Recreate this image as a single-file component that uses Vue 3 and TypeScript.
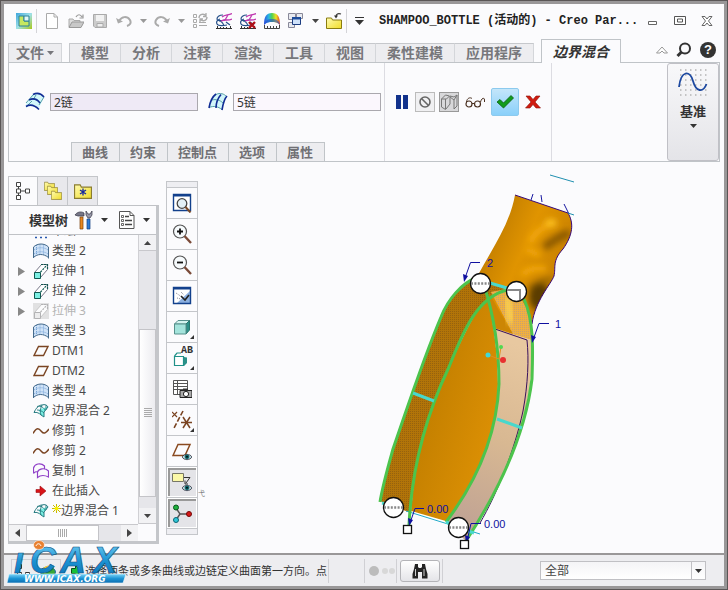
<script setup lang="ts">
import { ref } from 'vue'

interface TreeNode {
  label: string
  icon: string
  expandable?: boolean
  suppressed?: boolean
  pending?: boolean
}

const quickGroups: { icon: string; label: string; caret?: boolean }[] = [
  { icon: 'new', label: '新建' },
  { icon: 'open', label: '打开' },
  { icon: 'save', label: '保存' },
  { icon: 'undo', label: '撤消', caret: true },
  { icon: 'redo', label: '重做', caret: true },
  { icon: 'regen', label: '重新生成' },
  { icon: 'mesh', label: '曲面分析' },
  { icon: 'meshx', label: '删除分析' },
  { icon: 'rainbow', label: '外观' },
  { icon: 'windows', label: '窗口', caret: true },
  { icon: 'closef', label: '关闭' },
]

const ribbonTabs = ['模型', '分析', '注释', '渲染', '工具', '视图', '柔性建模', '应用程序']
const panelTabs = ['曲线', '约束', '控制点', '选项', '属性']

const tree: TreeNode[] = [
  { label: '草绘 1', icon: 'sketch' },
  { label: '类型 2', icon: 'style' },
  { label: '拉伸 1', icon: 'extrude', expandable: true },
  { label: '拉伸 2', icon: 'extrude', expandable: true },
  { label: '拉伸 3', icon: 'extrude', expandable: true, suppressed: true },
  { label: '类型 3', icon: 'style' },
  { label: 'DTM1', icon: 'plane' },
  { label: 'DTM2', icon: 'plane' },
  { label: '类型 4', icon: 'style' },
  { label: '边界混合 2', icon: 'blend' },
  { label: '修剪 1', icon: 'trim' },
  { label: '修剪 2', icon: 'trim' },
  { label: '复制 1', icon: 'copy' },
  { label: '在此插入', icon: 'insert' },
  { label: '边界混合 1', icon: 'blend', pending: true },
]

const viewTools: { icon: string; label: string; on?: boolean; more?: boolean }[] = [
  { icon: 'refit', label: '重新调整' },
  { icon: 'zoomin', label: '放大' },
  { icon: 'zoomout', label: '缩小' },
  { icon: 'repaint', label: '重画' },
  { icon: 'shade', label: '显示样式', more: true },
  { icon: 'views', label: '已命名视图', more: true },
  { icon: 'manager', label: '视图管理器' },
  { icon: 'datum', label: '基准显示', more: true },
  { icon: 'planeeye', label: '平面显示' },
  { icon: 'noteeye', label: '注释显示', on: true },
  { icon: 'spin', label: '旋转中心', on: true },
]

const firstDir = ref('2链')
const secondDir = ref('5链')
const filter = ref('全部')
</script>

<template>
  <div class="window">
    <svg class="defs" aria-hidden="true">
      <defs>
        <linearGradient id="gCreo" x1="0" y1="0" x2="1" y2="1">
          <stop offset="0" stop-color="#3da6dc" />
          <stop offset=".5" stop-color="#9fe0e8" />
          <stop offset="1" stop-color="#a8c818" />
        </linearGradient>
        <linearGradient id="gFolder" x1="0" y1="0" x2="1" y2="1">
          <stop offset="0" stop-color="#fffbb0" />
          <stop offset="1" stop-color="#f0dc28" />
        </linearGradient>
        <linearGradient id="gRain" x1="0" y1="0" x2="1" y2="0">
          <stop offset="0" stop-color="#3050e0" />
          <stop offset=".3" stop-color="#28b8e0" />
          <stop offset=".5" stop-color="#50d050" />
          <stop offset=".75" stop-color="#f0e020" />
          <stop offset="1" stop-color="#e04030" />
        </linearGradient>
      </defs>
      <symbol id="creo" viewBox="0 0 16 16">
        <rect width="16" height="16" fill="url(#gCreo)" />
        <path d="M3 3h5v5h5v5H3z" fill="#c6e860" stroke="#2a8098" />
        <path d="M8 3h5v5H8z" fill="#e0f6f4" stroke="#2a8098" />
      </symbol>
      <symbol id="new" viewBox="0 0 16 16">
        <path d="M2.500 .5h7.500l3.500 3.500v11.500h-11z" fill="#fff" stroke="#aaa" />
        <path d="M10 .5v3.500h3.500" fill="none" stroke="#aaa" />
      </symbol>
      <symbol id="open" viewBox="0 0 16 16">
        <path d="M1 14V6h4l1 1.500h6V9" fill="#ddd" stroke="#aaa" />
        <path d="M1 14.500 4 9h12l-3 5.500z" fill="#c8c8c8" stroke="#999" />
        <path d="M8 4c1.500-3 4.500-3 6 0M15 1.500V5h-3.500" fill="none" stroke="#999" stroke-width="1.200" />
      </symbol>
      <symbol id="save" viewBox="0 0 16 16">
        <path d="M1.500 1.500h13v13H3l-1.500-1.500z" fill="#ccc" stroke="#aaa" />
        <path d="M4 2h8v6H4z" fill="#f2f2f2" />
        <path d="M5 10.500h6V14H5z" fill="#eee" stroke="#aaa" />
      </symbol>
      <symbol id="undo" viewBox="0 0 16 16">
        <path d="M3 8c3-5 8-5 11-1 1.500 3 0 5-3 6" fill="none" stroke="#aaa" stroke-width="2" />
        <path d="M0 5l2 5.500 5-2z" fill="#aaa" />
      </symbol>
      <symbol id="redo" viewBox="0 0 16 16">
        <path d="M13 8c-3-5-8-5-11-1-1.500 3 0 5 3 6" fill="none" stroke="#aaa" stroke-width="2" />
        <path d="M16 5l-2 5.500-5-2z" fill="#aaa" />
      </symbol>
      <symbol id="regen" viewBox="0 0 16 16">
        <g fill="none" stroke="#aaa">
          <path d="M1.500 1.500h3v3h-3zM1.500 6.500h3v3h-3zM1.500 11.500h3v3h-3zM7 9.500h7M7 12.500h8" />
          <path d="M7 5c0-4 5-5 7-2M15 4c0 4-5 5-7 2M14 0v3.500h-3M8 9V6h3" stroke-width="1.300" />
        </g>
      </symbol>
      <symbol id="mesh" viewBox="0 0 16 16">
        <path d="M7 2C3 2 1 4 1 6s3 2 8 1M4 6C1 7 0 9 1 11s5 2 10 1M3 8c3 0 4 2 5 5M10 9l4 3" fill="none" stroke="#26508a" stroke-width="1.200" />
        <path d="M6 4C9 1.500 12 2.500 16 .5M5 8C9 6 12 8 16 6M12 2 9 7" fill="none" stroke="#c038b0" stroke-width="1.300" />
        <path d="M0 15.500h16M1.500 13v2M4.500 14v1M7.500 14v1M10.500 14v1M14.500 13v2" stroke="#333" />
      </symbol>
      <symbol id="meshx" viewBox="0 0 16 16">
        <use href="#mesh" width="16" height="16" />
        <path d="M9 9l6 6M15 9l-6 6" stroke="#b01018" stroke-width="2.400" />
      </symbol>
      <symbol id="rainbow" viewBox="0 0 16 16">
        <path d="M0 12C0 4 2 0 8 0s8 4 8 12c-3-3-5-3-8-3s-5 0-8 3z" fill="url(#gRain)" />
        <path d="M0 12c3-3 5-3 8-3s5 0 8 3c-1-5-4-6-8-6s-7 1-8 6z" fill="#2848d0" opacity=".6" />
        <path d="M.5 12v3.500h15V12M3.500 13v2M6.500 13v2M9.500 13v2M12.500 13v2" fill="none" stroke="#444" />
      </symbol>
      <symbol id="windows" viewBox="0 0 16 16">
        <path d="M.5.5h7v6h-7zM8.500 .5h6v5h-6zM.5 9.500h6v5h-6z" fill="#e8eaf0" stroke="#889" />
        <path d="M4.500 4.500h8v7h-8z" fill="#cfe2fa" stroke="#1c3c80" />
        <path d="M4 4h9v2.500H4z" fill="#1c4c9c" />
      </symbol>
      <symbol id="closef" viewBox="0 0 16 16">
        <path d="M.5 15.500V5h5l1 2h9v8.500z" fill="url(#gFolder)" stroke="#8a7c10" />
        <path d="M15 1c-3-1-5 0-5 3" fill="none" stroke="#333" stroke-width="1.200" />
        <path d="M8 2.500h4l-2 3z" fill="#333" />
      </symbol>
      <symbol id="folder" viewBox="0 0 16 14">
        <path d="M.5 13.500V1.500h5l1 2h9v10z" fill="url(#gFolder)" stroke="#8a7c30" />
      </symbol>
      <symbol id="surf" viewBox="0 0 20 20">
        <path d="M1 12C5 6 7 2 8 2c4-2 8 0 11 3l-5 11C11 12 6 12 1 16z" fill="#d2f6fa" />
        <path d="M1 11 8 3M14 13l5-8M8 8l3-5M1 15l6-6" stroke="#58a0a8" fill="none" />
        <path d="M8 2.500c4-2 8-1 11 2.500M4 8c4-2 8-1 11 3M1 14.500c5-3 9-1 13 3" stroke="#102c94" stroke-width="1.600" fill="none" />
      </symbol>
      <symbol id="surf2" viewBox="0 0 20 20">
        <path d="M1 16C2 8 5 3 8 2c4-1 8 0 11 2-3 3-4 9-5 14-3-3-8-4-13-2z" fill="#d2f6fa" />
        <path d="M8 2.500c4-2 8-1 11 2.500M4 8c4-1 8 0 11 3M1 15.500c5-2 9-1 13 2" stroke="#58a0a8" fill="none" />
        <path d="M8 2C4 5 2 10 1 16M13 2.500C10 6 8 10 8 16M19 4c-3 3-4 8-5 14" stroke="#102c94" stroke-width="1.600" fill="none" />
      </symbol>
      <symbol id="style" viewBox="0 0 16 16">
        <path d="M.5 14.500V4c4-4 11-4 15 0v11c-2-2-4-3-5-3-4-1-7 0-10 2.500z" fill="#cfe2f7" />
        <path d="M3.500 2v10M7 1.500V12M10.500 1.500V12M1 7c4-3 10-3 14 0M1 11c4-3 10-3 14 0" stroke="#7aa6d8" fill="none" stroke-dasharray="1 1" />
        <path d="M.5 15V4c4-4 11-4 15 0v11.500M.5 14.500c4-4 10-4 15 0" fill="none" stroke="#456a8c" />
      </symbol>
      <symbol id="extrude" viewBox="0 0 16 16">
        <path d="M1.500 9.500 8.500 1.500h6v5l-7 8" fill="#fff" stroke="#778" />
        <path d="M8 1.500h6.500V7M7.500 9l6.500-7" fill="none" stroke="#105850" stroke-width="1.200" stroke-dasharray="2 1" />
        <path d="M1.500 9.500h6v6h-6z" fill="#7cf0e4" stroke="#105850" />
      </symbol>
      <symbol id="plane" viewBox="0 0 16 16">
        <path d="M5.500 3.500H15l-4.500 9H1z" fill="none" stroke="#7a4422" stroke-width="1.400" />
      </symbol>
      <symbol id="blend" viewBox="0 0 16 16">
        <path d="M6 7c3-2 5-2 9-3l-4 5v5L8 12C7 10 6 9 6 7z" fill="#7cf0e4" />
        <path d="M1 9.500C3 5 6 2 9 2c3-1 5 0 6 2l-4 5v5l-3-2c-2-2-4-3-7-2.500z" fill="none" stroke="#257a80" />
        <path d="M4 3.500c4-1 7 1 8 4M9 2C7 6 7 9 8 12M4 7c3 0 5 1 7 3M13 2v5" fill="none" stroke="#257a80" stroke-width=".9" />
      </symbol>
      <symbol id="trim" viewBox="0 0 16 16">
        <path d="M0 10.500C4 3.500 6 5.500 8.500 8.500S13 10 16 6" fill="none" stroke="#7a4422" stroke-width="1.500" />
      </symbol>
      <symbol id="copy" viewBox="0 0 16 16">
        <path d="M.5 10.500V5c1-4 7-6 11-2v3M4.500 14.500V9c1-3 7-5 11-1v6c-4-2-8-2-11 .5zM.5 10.500c1-1.500 2-2 4-2" fill="none" stroke="#9040c8" stroke-width="1.200" />
      </symbol>
      <symbol id="insert" viewBox="0 0 16 16">
        <path d="M3 6.500h4V3l6 5-6 5V9.500H3z" fill="#d81418" stroke="#a00c10" stroke-width=".6" />
      </symbol>
      <symbol id="sketch" viewBox="0 0 16 16">
        <path d="M2 14.500h12M2 11h12" stroke="#2858b0" stroke-width="1.500" stroke-dasharray="2 3" />
      </symbol>
      <symbol id="eye" viewBox="0 0 10 8">
        <path d="M0 4C2 .5 8 .5 10 4 8 7.500 2 7.500 0 4z" fill="#bcd8dc" stroke="#334" stroke-width=".8" />
        <circle cx="5" cy="3.800" r="2.400" fill="#10686c" />
        <circle cx="5" cy="3.800" r="1" fill="#011" />
      </symbol>
      <symbol id="refit" viewBox="0 0 20 20">
        <path d="M1.500 1.500h17v16h-17z" fill="#fff" stroke="#12408c" stroke-width="1.400" />
        <path d="M1 1h18v2.500H1z" fill="#12408c" />
        <circle cx="10" cy="10.500" r="4.800" fill="#e4f0f6" stroke="#444" stroke-width="1.300" />
        <path d="M13.500 14l5 5.500" stroke="#7a4a28" stroke-width="2" />
      </symbol>
      <symbol id="zoomin" viewBox="0 0 20 20">
        <circle cx="8" cy="7.500" r="6.500" fill="#f6fafc" stroke="#555" stroke-width="1.200" />
        <path d="M5 7.500h6M8 4.500v6" stroke="#111" stroke-width="1.800" />
        <path d="M12.500 12l6.500 7" stroke="#7a4a38" stroke-width="2.400" />
      </symbol>
      <symbol id="zoomout" viewBox="0 0 20 20">
        <circle cx="8" cy="7.500" r="6.500" fill="#f6fafc" stroke="#555" stroke-width="1.200" />
        <path d="M5 7.500h6" stroke="#111" stroke-width="1.800" />
        <path d="M12.500 12l6.500 7" stroke="#7a4a38" stroke-width="2.400" />
      </symbol>
      <symbol id="repaint" viewBox="0 0 20 20">
        <path d="M2 2h16v15H2z" fill="#fff" />
        <path d="M18 5v12H5z" fill="#8cb0e0" />
        <path d="M1.500 1.500h17v16h-17z" fill="none" stroke="#12408c" stroke-width="1.400" />
        <path d="M1 1h18v2.500H1z" fill="#12408c" />
        <path d="M4 7l6 4M5 12l4 1M9 6l3 3" stroke="#889" stroke-dasharray="1 1" />
        <path d="M9 10l4 4 4-5" fill="none" stroke="#222" stroke-width="1.600" />
      </symbol>
      <symbol id="shade" viewBox="0 0 20 20">
        <path d="M2.500 7 6 3.500h11.500L14 7z" fill="#d4f4f0" stroke="#57908c" />
        <path d="M14 7l3.500-3.500V13L14 17z" fill="#2c9088" stroke="#287870" />
        <path d="M2.500 7H14v10H2.500z" fill="#a4e4dc" stroke="#57908c" />
      </symbol>
      <symbol id="views" viewBox="0 0 20 20">
        <path d="M2.500 8.500h9v9h-9zM2.500 8l2.500-3h4" fill="#fff" stroke="#209088" stroke-width="1.200" />
        <path d="M12 9v9l3-3V9.500" fill="#2c9088" />
      </symbol>
      <symbol id="manager" viewBox="0 0 20 20">
        <path d="M1.500 1.500h14v14h-14zM1.500 4.500h14M1.500 7.500h14M1.500 10.500h14M5.500 1.500v14" fill="#fff" stroke="#555" />
        <path d="M8 11.500h12v7H8z" fill="#aaa" stroke="#222" />
        <circle cx="14" cy="15" r="2.600" fill="#fff" stroke="#222" />
        <path d="M11 9.500h5v2h-5z" fill="#333" />
      </symbol>
      <symbol id="datum" viewBox="0 0 20 20">
        <path d="M0 2l5 5M5 2 0 7" stroke="#7a4422" stroke-width="1.200" />
        <path d="M11 1 2 18" stroke="#7a4422" stroke-width="1.600" stroke-dasharray="5 2" />
        <path d="M9 12.500h11M18 7l-7 11M11 7l7 11" stroke="#7a4422" stroke-width="1.500" />
      </symbol>
      <symbol id="planeeye" viewBox="0 0 20 20">
        <path d="M6 3.500h12l-5 11H1z" fill="none" stroke="#8a4a20" stroke-width="1.500" />
        <use href="#eye" x="10" y="12" width="10" height="8" />
      </symbol>
      <symbol id="noteeye" viewBox="0 0 20 20">
        <path d="M.5 1.500h11v8H.5z" fill="#fbf8a8" stroke="#776" />
        <path d="M12 5.500h6L14 11" fill="none" stroke="#333" />
        <path d="M13 8.500v3.500h3" fill="none" stroke="#333" />
        <use href="#eye" x="10" y="12" width="10" height="8" />
      </symbol>
      <symbol id="spin" viewBox="0 0 20 20">
        <path d="M4 5l4 6h8M8 11l-4 6" stroke="#555" stroke-width="1.400" fill="none" />
        <circle cx="4" cy="4.500" r="2.500" fill="#20b040" stroke="#085818" />
        <circle cx="17" cy="11" r="2.500" fill="#d81818" stroke="#700808" />
        <circle cx="4" cy="17" r="2.500" fill="#30c8d8" stroke="#0c6474" />
      </symbol>
      <symbol id="caret" viewBox="0 0 7 4"><path d="M0 0h7L3.500 4z" fill="currentColor" /></symbol>
    </svg>

    <header class="titlebar">
      <button class="qbtn" aria-label="Creo"><svg class="i16"><use href="#creo" /></svg></button>
      <span class="vsep" />
      <template v-for="q in quickGroups" :key="q.icon">
        <button class="qbtn" :aria-label="q.label"><svg class="i16"><use :href="'#' + q.icon" /></svg></button>
        <button v-if="q.caret" class="qcaret" :class="{ dim: q.icon !== 'windows' }" :aria-label="q.label + '列表'">
          <svg class="car"><use href="#caret" /></svg>
        </button>
      </template>
      <span class="vsep" />
      <button class="qcaret custom" aria-label="自定义">
        <svg width="9" height="8" viewBox="0 0 9 8"><path d="M0 .5h9" stroke="#333" /><path d="M0 3h9L4.500 8z" fill="#333" /></svg>
      </button>
      <h1>SHAMPOO_BOTTLE (活动的) - Creo Par...</h1>
      <div class="winbtns">
        <button aria-label="最小化"><svg width="12" height="12" viewBox="0 0 12 12"><path d="M1.500 6.500h8v3h-8z" fill="#fff" stroke="#666" /></svg></button>
        <button aria-label="最大化"><svg width="12" height="12" viewBox="0 0 12 12"><path d="M.5 1.500h11v8H.5zM3.500 4h5v3h-5z" fill="#fff" stroke="#555" /></svg></button>
        <button aria-label="关闭窗口"><svg width="12" height="12" viewBox="0 0 12 12"><path d="M1 1.500h3l2 2.500 2-2.500h3L7.500 6l3.500 4.500H8L6 8l-2 2.500H1L4.500 6z" fill="#fff" stroke="#666" /></svg></button>
      </div>
    </header>

    <nav class="tabs">
      <button class="tab file">文件<svg class="car"><use href="#caret" /></svg></button>
      <div class="tabset">
        <button v-for="t in ribbonTabs" :key="t" class="tab">{{ t }}</button>
      </div>
      <button class="tab active">边界混合</button>
      <div class="tabtools">
        <button aria-label="最小化功能区"><svg width="12" height="8" viewBox="0 0 12 8"><path d="M.5 7 6 1l5.500 6H8L6 5 4 7z" fill="#fff" stroke="#999" /></svg></button>
        <button aria-label="搜索"><svg width="16" height="16" viewBox="0 0 16 16"><circle cx="9" cy="6.500" r="5" fill="none" stroke="#333" stroke-width="2" /><path d="M5.500 10 1.500 14" stroke="#333" stroke-width="3" /></svg></button>
        <button class="help" aria-label="帮助">?</button>
      </div>
    </nav>

    <section class="ribbon">
      <div class="dash">
        <div class="fields">
          <label for="dir1" aria-label="第一方向"><svg width="20" height="20"><use href="#surf" /></svg></label>
          <input id="dir1" v-model="firstDir" class="on" type="text" />
          <label for="dir2" class="second" aria-label="第二方向"><svg width="20" height="20"><use href="#surf2" /></svg></label>
          <input id="dir2" v-model="secondDir" type="text" />
        </div>
        <div class="subtabs">
          <button v-for="p in panelTabs" :key="p">{{ p }}</button>
        </div>
      </div>
      <div class="confirm">
        <button class="pause" aria-label="暂停"><svg width="12" height="14" viewBox="0 0 12 14"><path d="M0 0h5v14H0zM7 0h5v14H7z" fill="#12328c" /></svg></button>
        <button class="box" aria-label="无预览"><svg width="12" height="12" viewBox="0 0 12 12"><circle cx="6" cy="6" r="5" fill="none" stroke="#666" stroke-width="1.600" /><path d="M2.500 2.500l7 7" stroke="#666" stroke-width="1.600" /></svg></button>
        <button class="box pressed" aria-label="分离预览"><svg width="18" height="18" viewBox="0 0 18 18"><path d="M1.500 6l4-4 4 1-3 3zM1.500 6v8l4 2.500V6M6 16l4-5V3l4 1 3-2v11l-3 3v-9l3-5M10 4l4 3" fill="none" stroke="#777" /></svg></button>
        <button class="eyeg" aria-label="校验"><svg width="20" height="12" viewBox="0 0 20 12"><circle cx="4" cy="8" r="3" fill="none" stroke="#4a3020" stroke-width="1.200" /><circle cx="12.500" cy="8" r="3" fill="none" stroke="#4a3020" stroke-width="1.200" /><path d="M7 7.500h2.500M1.500 6C2 2 5 1 7 2.500M15.500 6c1-4 4-5 4-2v2" fill="none" stroke="#4a3020" /></svg></button>
        <button class="ok" aria-label="确定"><svg width="18" height="14" viewBox="0 0 18 14"><path d="M1 7l3-2.500L7.500 8 15 .5 17.500 3 7.500 13z" fill="#109c1c" stroke="#0a5c10" stroke-width=".8" /></svg></button>
        <button class="cancel" aria-label="取消"><svg width="16" height="14" viewBox="0 0 16 14"><path d="M1 1h4l3 3.500L11 1h4l-5 6 5.500 6H11L8 9.500 5 13H.5L6 7z" fill="#d01c10" stroke="#8c1008" stroke-width=".6" /></svg></button>
      </div>
      <div class="spare" />
      <button class="datumbtn">
        <svg width="30" height="30" viewBox="0 0 30 30">
          <path d="M2 2h28M2 7h28M2 12h28M2 17h28M2 22h28M2 27h28" stroke="#b4b4b4" stroke-width="1.500" stroke-dasharray="1.500 3.500" />
          <path d="M1 19C3 2 12 2 15 13s10 12 13.500 3" fill="none" stroke="#1c48a0" stroke-width="1.800" />
        </svg>
        <span>基准</span>
        <svg class="car"><use href="#caret" /></svg>
      </button>
    </section>

    <main class="work">
      <aside class="nav">
        <div class="navtabs">
          <button class="cur" aria-label="模型树"><svg width="14" height="20" viewBox="0 0 14 20"><path d="M.5 1.500h4v4h-4zM.5 8h4v4h-4zM.5 14.500h4v4h-4zM9.500 8h4v4h-4zM2.500 5.500V8M2.500 12v2.500M4.500 10h5" fill="#fff" stroke="#444" /></svg></button>
          <button aria-label="文件夹浏览器"><svg width="20" height="20" viewBox="0 0 20 20"><use href="#folder" x="1" y="0" width="11" height="10" /><use href="#folder" x="4" y="4" width="11" height="10" /><use href="#folder" x="8" y="9" width="11" height="10" /></svg></button>
          <button aria-label="收藏夹"><svg width="18" height="16" viewBox="0 0 18 16"><use href="#folder" x="0" y="0" width="18" height="16" /><path d="M9 5.500v7M6 7l6 4M12 7l-6 4" stroke="#1428a0" stroke-width="1.300" /></svg></button>
        </div>
        <div class="navbox">
          <div class="navhead">
            <h2>模型树</h2>
            <button class="tool" aria-label="设置"><svg width="20" height="20" viewBox="0 0 20 20"><path d="M1 5c2-3 6-4 9-2v3H4z" fill="#778" stroke="#334" stroke-width=".7" /><path d="M6 7h3v12H6z" fill="#e88820" stroke="#7a4008" stroke-width=".7" /><path d="M13 9h3v10h-3z" fill="#2c7cd8" stroke="#103c80" stroke-width=".7" /><path d="M12 1v4l2 3h2l2-3V1l-2 3h-2z" fill="#99a" stroke="#334" stroke-width=".7" /></svg></button>
            <button class="drop" aria-label="设置列表"><svg class="car"><use href="#caret" /></svg></button>
            <button class="tool list" aria-label="显示"><svg width="16" height="20" viewBox="0 0 16 20"><path d="M.5 1.500H11l4 4v13H.5z" fill="#fff" stroke="#555" /><path d="M11 1.500v4h4" fill="none" stroke="#555" /><path d="M6 6.500h4M6 10.500h7M6 14.500h7" stroke="#444" stroke-width="1.300" /><path d="M2.500 5.500h2v2h-2zM2.500 9.500h2v2h-2zM2.500 13.500h2v2h-2z" fill="none" stroke="#444" stroke-width=".8" /></svg></button>
            <button class="drop" aria-label="显示列表"><svg class="car"><use href="#caret" /></svg></button>
          </div>
          <div class="treearea">
            <ul class="tree">
              <li v-for="n in tree" :key="n.label" :class="{ off: n.suppressed }">
                <span class="twist"><svg v-if="n.expandable" width="7" height="9" viewBox="0 0 7 9"><path d="M0 0l7 4.500L0 9z" fill="#888" /></svg></span>
                <svg class="i16"><use :href="'#' + n.icon" /></svg>
                <svg v-if="n.pending" class="star" width="9" height="9" viewBox="0 0 9 9"><path d="M4.500 0v9M0 4.500h9M1 1l7 7M8 1 1 8" stroke="#c8b800" /><circle cx="4.500" cy="4.500" r="2" fill="#f8f000" /></svg>
                <span>{{ n.label }}</span>
              </li>
            </ul>
            <div class="vscroll">
              <button class="end" aria-label="向上"><svg class="car up"><use href="#caret" /></svg></button>
              <div class="gap a" />
              <div class="thumb"><i v-for="k in 5" :key="k" /></div>
              <div class="gap b" />
              <button class="end" aria-label="向下"><svg class="car"><use href="#caret" /></svg></button>
            </div>
          </div>
          <div class="hscroll">
            <button class="end" aria-label="向左"><svg width="5" height="8" viewBox="0 0 5 8"><path d="M5 0v8L0 4z" fill="#444" /></svg></button>
            <div class="thumb"><i v-for="k in 5" :key="k" /></div>
            <div class="gap" />
            <button class="end" aria-label="向右"><svg width="5" height="8" viewBox="0 0 5 8"><path d="M0 0v8l5-4z" fill="#444" /></svg></button>
          </div>
        </div>
      </aside>

      <div class="viewbar">
        <div class="grip" />
        <button v-for="v in viewTools" :key="v.icon" :class="{ on: v.on }" :aria-label="v.label">
          <svg width="20" height="20"><use :href="'#' + v.icon" /></svg>
          <span v-if="v.icon === 'views'" class="ab">AB</span>
          <svg v-if="v.more" class="more" width="4" height="4" viewBox="0 0 4 4"><path d="M4 0v4H0z" fill="#333" /></svg>
        </button>
        <div class="foot" />
      </div>

      <div class="canvas">
        <svg class="model" viewBox="198 163 526 390">
          <defs>
            <pattern id="dots" width="2" height="2" patternUnits="userSpaceOnUse"><rect width="1" height="1" fill="#96620e" /></pattern>
            <pattern id="dots2" width="2" height="2" patternUnits="userSpaceOnUse"><rect width="1" height="1" fill="#c8a070" /></pattern>
            <linearGradient id="gNeck" x1="490" y1="230" x2="560" y2="260" gradientUnits="userSpaceOnUse">
              <stop offset="0" stop-color="#c07c00" /><stop offset=".5" stop-color="#e09400" /><stop offset="1" stop-color="#cc8400" />
            </linearGradient>
            <linearGradient id="gBody" x1="430" y1="400" x2="500" y2="420" gradientUnits="userSpaceOnUse">
              <stop offset="0" stop-color="#c48000" /><stop offset="1" stop-color="#dc9004" />
            </linearGradient>
            <linearGradient id="gSide" x1="530" y1="350" x2="460" y2="530" gradientUnits="userSpaceOnUse">
              <stop offset="0" stop-color="#e8c8a0" /><stop offset=".5" stop-color="#d8b892" /><stop offset="1" stop-color="#bfa294" />
            </linearGradient>
            <clipPath id="neck"><path d="M515 196 568 214C574 224 573 236 563 250 552 262 556 268 554 277 551 285 535 302 532 325L532 341 495 330 478 276C492 250 510 225 515 196z" /></clipPath>
            <filter id="soft" x="-50%" y="-50%" width="200%" height="200%"><feGaussianBlur stdDeviation="3" /></filter>
          </defs>

          <path d="M550 176 574 183" stroke="#2090b0" />
          <g clip-path="url(#neck)">
            <rect x="470" y="190" width="110" height="160" fill="url(#gNeck)" />
            <g filter="url(#soft)">
              <path d="M570 234c-10 2-18 10-26 14" stroke="#8a5800" stroke-width="8" fill="none" />
              <path d="M554 282c-10-4-18 4-26 8" stroke="#a06a00" stroke-width="6" fill="none" />
              <path d="M530 244c4-10 10-14 22-20M526 251c6 0 8 4 14 5M522 276c6-6 14-8 24-6" stroke="#f8ac10" stroke-width="5" fill="none" />
              <ellipse cx="540" cy="298" rx="11" ry="14" fill="#5c3c04" />
              <ellipse cx="551" cy="224" rx="6" ry="4" fill="#ffc420" />
            </g>
          </g>
          <path d="M515 196 568 214C574 224 573 236 563 250 552 262 556 268 554 277 551 285 535 302 532 325" fill="none" stroke="#380878" />
          <path d="M533 195l-2 6M541 196l1 7M564 205l5 10" stroke="#1818a0" />
          <path d="M568 214l6 2" stroke="#2090b0" />

          <path d="M480 277C462 284 448 300 441 318 424 358 412 395 393 450 388 468 383 485 380 502L411 514C415 460 430 410 449 368 464 330 478 298 507 291z" fill="#b27408" />
          <path d="M480 277C462 284 448 300 441 318 424 358 412 395 393 450 388 468 383 485 380 502L411 514C415 460 430 410 449 368 464 330 478 298 507 291z" fill="url(#dots)" />
          <path d="M487 299C474 314 466 332 449 368 428 412 415 460 411 513L446 523C480 478 497 432 498 385 498 365 495 325 487 299z" fill="url(#gBody)" />
          <path d="M489 294 513 336 494 330z" fill="#cc8604" />
          <path d="M491 293 507 290C527 298 532 320 532 341L513 335z" fill="#f0b040" />
          <path d="M491 293 507 290C527 298 532 320 532 341L513 335z" fill="url(#dots2)" />
          <path d="M507 298 511 324" stroke="#ffd850" stroke-width="6" filter="url(#soft)" />
          <path d="M494 329 532 341C534 385 524 430 503 475 490 500 478 522 466 542L446 523C480 478 497 432 498 385 498 365 497 350 494 329z" fill="url(#gSide)" />
          <path d="M495 330 527 341C529 360 528 385 523 412 515 450 497 495 480 524" fill="none" stroke="#38105c" />

          <path d="M411 513.500 447 524" stroke="#fff" stroke-width="3" />
          <path d="M406 512 480 535" stroke="#20a8c8" />
          <g fill="none" stroke="#4cc44c" stroke-width="3">
            <path d="M476 279C462 284 448 300 441 318 424 358 412 395 393 450 388 468 383 485 380 503" />
            <path d="M507 291C478 298 464 330 449 368 428 412 412 465 409 526" />
            <path d="M484 286C495 320 499 355 499 385 497 432 480 478 446 523" />
            <path d="M524 300C534 322 533 350 532 380 526 430 503 485 466 542" />
          </g>
          <g stroke="#48d8cc" stroke-width="3">
            <path d="M490 284 507 289M413 394 434 402M497 420 522 429M382 504 386 505M446 523 451 525M468 532 474 534" />
          </g>

          <path d="M488 356l11 4 2-12M499 360l4 1" stroke="#e09020" fill="none" />
          <circle cx="488" cy="356" r="2.500" fill="#40d8d8" />
          <circle cx="501" cy="348" r="2" fill="#50d850" />
          <circle cx="503" cy="361" r="3" fill="#e83030" />

          <g fill="none" stroke="#1010a0" stroke-width="1">
            <path d="M464.500 280.500 470.500 263.500H480M533 341l6-16.500h10M410 524l5-14.500h9M467 542l4-17.500h10" />
          </g>
          <path d="M463 275l5 2-4 6zM531 336l5 2-4 6zM408 519l5 2-4 6zM465 536l5 2-4 6z" fill="#1010a0" />

          <g fill="#fff" stroke="#111" stroke-width="1.300">
            <circle cx="480.500" cy="284.500" r="10" /><circle cx="516.500" cy="292.500" r="10" />
            <circle cx="393.500" cy="508.500" r="10" /><circle cx="458.500" cy="528.500" r="10" />
            <rect x="403.500" y="526.500" width="8" height="8" /><rect x="460.500" y="541.500" width="8" height="8" />
          </g>
          <path d="M471 284.500h19M384 508.500h19M449 528.500h19" stroke="#888" stroke-width="2.500" stroke-dasharray="2 1.400" />
          <path d="M507 291h13v10" fill="none" stroke="#888" stroke-width="2" />
          <g class="dim">
            <text x="487" y="268">2</text><text x="555" y="329">1</text>
            <text x="427" y="514">0.00</text><text x="484" y="529">0.00</text>
          </g>
          <text class="hint" x="198" y="497">弋</text>
        </svg>
      </div>
    </main>

    <footer class="status">
      <div class="toggles">
        <button aria-label="导航器"><svg width="14" height="14" viewBox="0 0 14 14"><path d="M.5 .5h4v4h-4zM.5 8.500h4v4h-4zM8.500 8.500h4v4h-4zM2.500 4.500v4M4.500 10.500h4" fill="#fff" stroke="#333" /></svg></button>
        <button aria-label="浏览器"><svg width="16" height="14" viewBox="0 0 16 14"><ellipse cx="8" cy="8" rx="7.500" ry="5" fill="#38a838" stroke="#2068a0" /><path d="M2 6c4-6 10-5 12-2-4 0-8 3-9 6z" fill="#f0d020" /></svg></button>
      </div>
      <svg class="go" width="11" height="12" viewBox="0 0 11 12"><path d="M.5 3.500h4v-3l6 5.500-6 5.500v-3h-4z" fill="#18c038" stroke="#0a5018" /></svg>
      <p>选择两条或多条曲线或边链定义曲面第一方向。点</p>
      <div class="cell blank" />
      <div class="cell lights"><svg width="28" height="12" viewBox="0 0 28 12"><circle cx="6" cy="6" r="5" fill="#bcbcbc" /><circle cx="17" cy="6" r="3" fill="#d8d8d8" /><circle cx="24" cy="6" r="3" fill="#d8d8d8" /></svg></div>
      <div class="cell find"><button aria-label="查找"><svg width="16" height="16" viewBox="0 0 16 16"><path d="M3 1h3v3l1 1h2l1-1V1h3l1 5 1.500 5v4.500H10V9H6v6.500H.5V11L2 6z" fill="#222" /><path d="M3.500 6v7M12 6v7" stroke="#ccc" /></svg></button></div>
      <div class="filter">
        <select v-model="filter" aria-label="选择过滤器"><option>全部</option></select>
        <span class="arrow"><svg class="car"><use href="#caret" /></svg></span>
      </div>
      <svg class="brand" width="124" height="44" viewBox="0 0 124 44">
        <defs>
          <linearGradient id="gBlue" x1="0" y1="0" x2="0" y2="1"><stop offset="0" stop-color="#7cd4f8" /><stop offset=".5" stop-color="#1c94d4" /><stop offset="1" stop-color="#0c6cb0" /></linearGradient>
        </defs>
        <path d="M3 34h117l-3 9H1z" fill="url(#gBlue)" stroke="#e8f6fc" stroke-width=".6" />
        <g class="mark"><text x="8" y="33">ı</text><text x="24" y="33">C</text><text x="54" y="33">A</text><text x="87" y="33">X</text></g>
        <ellipse cx="33" cy="5" rx="5.500" ry="4.500" fill="#e88030" stroke="#fff" stroke-width=".6" />
        <path d="M30 6c1-3 4-3 5 0" stroke="#fff" fill="none" />
        <text class="url" x="18" y="42">WWW.ICAX.ORG</text>
      </svg>
    </footer>
  </div>
</template>

<style>
body {
  background: #999;
}
</style>

<style scoped>
.window {
  box-sizing: border-box;
  min-height: 100vh;
  display: flex;
  flex-direction: column;
  background: #fbfbfd;
  border: 1px solid #5a5656;
  box-shadow: inset 0 0 0 3px #999798;
  padding: 3px;
  font-family: 'Noto Sans', 'Noto Sans CJK SC', sans-serif;
  font-size: 12px;
  color: #333;
}
.defs {
  position: absolute;
  width: 0;
  height: 0;
}
button {
  font: inherit;
  color: inherit;
  background: none;
  border: 0;
  padding: 0;
  margin: 0;
  display: flex;
  align-items: center;
  justify-content: center;
}
svg {
  display: block;
  flex: none;
}
.i16 {
  width: 16px;
  height: 16px;
}
.car {
  width: 7px;
  height: 4px;
}
.titlebar {
  height: 34px;
  display: flex;
  align-items: center;
  padding: 0 8px;
}
.qbtn {
  width: 24px;
  height: 24px;
}
.qcaret {
  width: 14px;
  height: 24px;
  color: #444;
}
.qcaret.dim {
  color: #999;
}
.vsep {
  width: 1px;
  height: 24px;
  background: #d4d4d8;
}
.vsep:nth-child(2) {
  margin-right: 3px;
}
.custom {
  margin: 0 13px 0 5px;
}
h1 {
  flex: 1;
  margin: 0;
  font: bold 12px/16px 'Liberation Mono', 'Noto Sans CJK SC', monospace;
  color: #222;
  white-space: nowrap;
}
.winbtns {
  display: flex;
  gap: 15px;
  padding-right: 3px;
}
.tabs {
  display: flex;
  align-items: flex-end;
  height: 24px;
  padding: 0 4px;
}
.tab {
  box-sizing: border-box;
  height: 19px;
  padding: 0 11px;
  font-size: 14px;
  line-height: 16px;
  font-weight: 600;
  color: #77777b;
  background: #ededf0;
  border-top: 1px solid #c6c8cc;
  border-right: 1px solid #d4d6da;
  white-space: nowrap;
}
.tab.file {
  padding: 0 7px;
  gap: 3px;
  border-left: 1px solid #c6c8cc;
  margin-right: 7px;
}
.tabset {
  display: flex;
  border-left: 1px solid #c6c8cc;
}
.tab.active {
  height: 24px;
  margin: 0 0 -1px 7px;
  position: relative;
  background: #fbfbfd;
  border: 1px solid #c0c4c8;
  border-bottom: 0;
  color: #333;
  font-style: italic;
  font-weight: 700;
}
.tabtools {
  margin-left: auto;
  align-self: center;
  display: flex;
  align-items: center;
  gap: 8px;
  padding-right: 4px;
}
.help {
  width: 16px;
  height: 16px;
  border-radius: 8px;
  background: #333;
  color: #fff;
  font: bold 13px/16px 'Liberation Sans', sans-serif;
}
.ribbon {
  margin: 0 4px;
  display: flex;
  min-height: 98px;
  border: 1px solid #c0c4c8;
}
.dash {
  width: 375px;
  display: flex;
  flex-direction: column;
  border-right: 1px solid #dcdce2;
}
.fields {
  display: flex;
  align-items: center;
  padding: 29px 3px 0 16px;
  gap: 5px;
}
.second {
  margin-left: 5px;
}
input {
  box-sizing: border-box;
  flex: 1;
  min-width: 0;
  height: 18px;
  border: 1px solid #aaa8ae;
  background: #fbf7fd;
  padding: 0 3px;
  font: inherit;
  color: #333;
}
input.on {
  background: #efeaf6;
}
.subtabs {
  margin-top: auto;
  display: flex;
  padding-left: 62px;
}
.subtabs button {
  height: 19px;
  padding: 0 11px 0 10px;
  font-size: 13px;
  line-height: 18px;
  font-weight: 600;
  color: #707074;
  background: #ededf0;
  border-top: 1px solid #c0c4c8;
  border-right: 1px solid #c0c4c8;
}
.subtabs button:first-child {
  border-left: 1px solid #c0c4c8;
}
.confirm {
  box-sizing: border-box;
  width: 166px;
  height: 78px;
  display: flex;
  align-items: center;
  gap: 4px;
  padding-left: 8px;
}
.pause {
  width: 18px;
}
.box {
  box-sizing: border-box;
  width: 20px;
  height: 20px;
  border: 1px solid #bbb;
  background: #f0f0f2;
}
.box.pressed {
  background: #d8d8da;
  border-color: #999;
}
.eyeg {
  width: 24px;
}
.ok {
  box-sizing: border-box;
  width: 28px;
  height: 28px;
  border: 1px solid #8ccaee;
  border-radius: 2px;
  background: linear-gradient(#c4e6fa, #8ad0fa);
}
.cancel {
  width: 20px;
}
.spare {
  flex: 1;
  border-left: 1px solid #dcdce2;
}
.datumbtn {
  box-sizing: border-box;
  width: 52px;
  flex-direction: column;
  justify-content: flex-start;
  gap: 6px;
  padding-top: 4px;
  border: 1px solid #c0c0c6;
  border-radius: 3px;
  background: linear-gradient(#f8f8fa, #e4e4e8);
  font-size: 13px;
  line-height: 14px;
  font-weight: 600;
}
.work {
  flex: 1;
  display: flex;
}
.nav {
  width: 151px;
  margin: 14px 7px 9px 4px;
  display: flex;
  flex-direction: column;
}
.navtabs {
  display: flex;
}
.navtabs button {
  box-sizing: border-box;
  width: 30px;
  height: 29px;
  background: #e8e8ec;
  border: 1px solid #c4c6ca;
  border-width: 1px 1px 0 0;
}
.navtabs .cur {
  background: #fbfbfd;
  border-left-width: 1px;
}
.navbox {
  flex: 1;
  display: flex;
  flex-direction: column;
  border: 1px solid #c0c2c6;
  border-right: 3px solid #c4c6ca;
  border-bottom: 3px solid #c4c6ca;
}
.navhead {
  display: flex;
  align-items: center;
  height: 28px;
  padding-left: 20px;
  border-bottom: 1px solid #c0c2c6;
}
h2 {
  margin: 0;
  width: 48px;
  font-size: 13px;
  line-height: 20px;
  font-weight: 600;
}
.tool {
  width: 22px;
}
.tool.list {
  margin-left: 3px;
}
.drop {
  width: 20px;
  height: 20px;
}
.treearea {
  flex: 1;
  display: flex;
  min-height: 286px;
}
.tree {
  flex: 1;
  height: 286px;
  margin: 0;
  padding: 0 0 0 9px;
  list-style: none;
  overflow: hidden;
  display: flex;
  flex-direction: column;
  justify-content: flex-end;
  color: #484848;
}
.tree li {
  flex: none;
  height: 20px;
  display: flex;
  align-items: center;
  line-height: 20px;
  white-space: nowrap;
}
.tree .twist {
  width: 15px;
}
.tree li > span:last-child {
  padding-left: 3px;
}
.tree .star {
  margin: -6px -3px 0 3px;
}
.tree .off {
  color: #b4b4b4;
}
.tree .off .i16 {
  filter: grayscale(1);
  opacity: 0.4;
  background: #bbb;
}
.vscroll {
  width: 17px;
  display: flex;
  flex-direction: column;
  background: #e6e6ea;
  border-left: 1px solid #d0d0d4;
}
.vscroll .end {
  height: 16px;
  background: #f2f2f4;
  border-bottom: 1px solid #c8c8cc;
  color: #444;
}
.up {
  transform: rotate(180deg);
}
.gap.a {
  flex: 77;
}
.gap.b {
  flex: 11;
}
.thumb {
  border: 1px solid #c4c4c8;
  background: #fff;
  display: flex;
  align-items: center;
  justify-content: center;
  gap: 1px;
}
.vscroll .thumb {
  flex: 165;
  flex-direction: column;
  background: linear-gradient(90deg, #fff, #ececf0);
}
.vscroll i {
  width: 8px;
  height: 1px;
  background: #aaa;
}
.hscroll {
  display: flex;
  height: 16px;
  margin-right: 18px;
  border-top: 1px solid #c8c8cc;
  background: #e6e6ea;
}
.hscroll .end {
  width: 17px;
  background: #f2f2f4;
}
.hscroll .thumb {
  flex: 72;
}
.hscroll .gap {
  flex: 22;
}
.hscroll i {
  width: 1px;
  height: 8px;
  background: #aaa;
}
.viewbar {
  box-sizing: border-box;
  align-self: flex-start;
  width: 32px;
  margin-top: 19px;
  border: 1px solid #c4c6ca;
}
.viewbar .grip,
.viewbar .foot {
  height: 5px;
  background: #eeeef2;
}
.viewbar button {
  box-sizing: border-box;
  position: relative;
  width: 100%;
  height: 31px;
  border-top: 1px solid #c4c6ca;
}
.viewbar .on {
  background: #e4e4e8;
  box-shadow: inset 0 0 0 1px #fff, inset 1px 1px 0 2px #999;
}
.more {
  position: absolute;
  right: 3px;
  bottom: 3px;
}
.ab {
  position: absolute;
  right: 4px;
  top: 2px;
  font: bold 10px/12px 'Liberation Mono', monospace;
}
.viewbar .foot {
  border-top: 1px solid #c4c6ca;
}
.canvas {
  flex: 1;
  min-width: 0;
}
.model {
  width: 100%;
  height: auto;
}
.dim text {
  font: 11px 'Liberation Sans', sans-serif;
  fill: #1010a0;
}
.hint {
  font: 7px 'Noto Sans CJK SC', sans-serif;
  fill: #777;
}
.status {
  position: relative;
  display: flex;
  align-items: center;
  height: 31px;
  border-top: 2px solid #999798;
  background: #ededf0;
}
.toggles {
  display: flex;
  margin-left: 7px;
  border: 1px solid #d0d0d4;
}
.toggles button {
  width: 24px;
  height: 22px;
}
.go {
  margin: 0 3px 0 10px;
}
.status p {
  margin: 0;
  width: 243px;
  font-size: 11px;
  line-height: 16px;
  white-space: nowrap;
}
.cell {
  box-sizing: border-box;
  height: 24px;
  border-left: 1px solid #d0d0d4;
  display: flex;
  align-items: center;
}
.blank {
  width: 36px;
}
.lights {
  width: 32px;
  padding-left: 3px;
}
.find {
  width: 47px;
  padding-left: 3px;
  border-right: 1px solid #d0d0d4;
}
.find button {
  box-sizing: border-box;
  width: 40px;
  height: 22px;
  border: 1px solid #b4b4b8;
  border-radius: 3px;
  background: linear-gradient(#fff, #e4e4e8);
}
.filter {
  position: relative;
  width: 166px;
  margin-left: auto;
  margin-right: 18px;
}
select {
  box-sizing: border-box;
  display: block;
  width: 100%;
  height: 19px;
  appearance: none;
  border: 1px solid #c0c0c4;
  border-radius: 0;
  background: linear-gradient(#f4f4f6, #fff);
  padding: 0 20px 0 4px;
  font: inherit;
  line-height: 17px;
  color: #444;
}
.arrow {
  position: absolute;
  top: 1px;
  bottom: 1px;
  right: 1px;
  width: 13px;
  border-left: 1px solid #c0c0c4;
  display: flex;
  align-items: center;
  justify-content: center;
  pointer-events: none;
}
.brand {
  position: absolute;
  left: 2px;
  bottom: 2px;
}
.mark text {
  font: italic bold 36px 'Liberation Sans', sans-serif;
  fill: url(#gBlue);
  stroke: #0c4c80;
  stroke-width: 0.6px;
}
.url {
  font: italic bold 9px 'DejaVu Sans', sans-serif;
  fill: #fff;
}
</style>
